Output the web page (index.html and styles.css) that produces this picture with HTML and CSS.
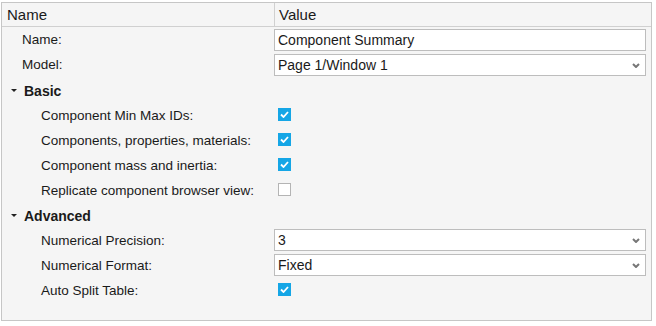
FILE: index.html
```html
<!DOCTYPE html>
<html lang="en">
<head>
    <meta charset="UTF-8">
    <title>Component Summary</title>
    <link rel="stylesheet" href="styles.css">
</head>
<body>
    <div class="panel">
        <div class="head">
            <div class="head-cell">Name</div>
            <div class="head-cell head-value">Value</div>
        </div>

        <div class="rows">
            <div class="row">
                <div class="label">Name:</div>
                <div class="value"><div class="field">Component Summary</div></div>
            </div>
            <div class="row">
                <div class="label">Model:</div>
                <div class="value">
                    <div class="field select">Page 1/Window 1
                        <svg class="arrow" width="8" height="5" viewBox="0 0 8 5"><polyline points="1,1 4,4 7,1" fill="none" stroke="#777" stroke-width="2"/></svg>
                    </div>
                </div>
            </div>

            <!-- Basic -->
            <div class="row section">
                <span class="caret"></span>Basic
            </div>
            <div class="row">
                <div class="label sub">Component Min Max IDs:</div>
                <div class="value"><span class="check on"><svg width="9" height="7" viewBox="0 0 9 7"><polyline points="1,3.5 3.5,6 8,1" fill="none" stroke="#fff" stroke-width="1.8"/></svg></span></div>
            </div>
            <div class="row">
                <div class="label sub">Components, properties, materials:</div>
                <div class="value"><span class="check on"><svg width="9" height="7" viewBox="0 0 9 7"><polyline points="1,3.5 3.5,6 8,1" fill="none" stroke="#fff" stroke-width="1.8"/></svg></span></div>
            </div>
            <div class="row">
                <div class="label sub">Component mass and inertia:</div>
                <div class="value"><span class="check on"><svg width="9" height="7" viewBox="0 0 9 7"><polyline points="1,3.5 3.5,6 8,1" fill="none" stroke="#fff" stroke-width="1.8"/></svg></span></div>
            </div>
            <div class="row">
                <div class="label sub">Replicate component browser view:</div>
                <div class="value"><span class="check"></span></div>
            </div>

            <!-- Advanced -->
            <div class="row section">
                <span class="caret"></span>Advanced
            </div>
            <div class="row">
                <div class="label sub">Numerical Precision:</div>
                <div class="value">
                    <div class="field select">3
                        <svg class="arrow" width="8" height="5" viewBox="0 0 8 5"><polyline points="1,1 4,4 7,1" fill="none" stroke="#777" stroke-width="2"/></svg>
                    </div>
                </div>
            </div>
            <div class="row">
                <div class="label sub">Numerical Format:</div>
                <div class="value">
                    <div class="field select">Fixed
                        <svg class="arrow" width="8" height="5" viewBox="0 0 8 5"><polyline points="1,1 4,4 7,1" fill="none" stroke="#777" stroke-width="2"/></svg>
                    </div>
                </div>
            </div>
            <div class="row">
                <div class="label sub">Auto Split Table:</div>
                <div class="value"><span class="check on"><svg width="9" height="7" viewBox="0 0 9 7"><polyline points="1,3.5 3.5,6 8,1" fill="none" stroke="#fff" stroke-width="1.8"/></svg></span></div>
            </div>
        </div>
    </div>
</body>
</html>
```

FILE: styles.css
```css
body {
    margin: 0;
    background: #fff;
    font-family: "Liberation Sans", Arial, sans-serif;
    font-size: 13.5px;
    color: #1a1a1a;
}

.panel {
    box-sizing: border-box;
    width: 651px;
    height: 319px;
    margin: 2px 0 0 1px;
    border: 1px solid #c6c6c6;
    background: #f5f5f5;
}

.head {
    display: grid;
    grid-template-columns: 272px 1fr;
    height: 23px;
    border-bottom: 1px solid #d0d0d0;
}

.head-cell {
    display: flex;
    align-items: center;
    padding-left: 5px;
    font-size: 15px;
}

.head-value {
    border-left: 1px solid #d0d0d0;
    padding-left: 4px;
}

.row {
    box-sizing: border-box;
    display: grid;
    grid-template-columns: 272px 1fr;
    height: 25px;
    align-items: center;
}

.label {
    padding-left: 20px;
}

.label.sub {
    padding-left: 39px;
    padding-top: 2px;
}

.value {
    padding-right: 5px;
}

.field {
    box-sizing: border-box;
    height: 22px;
    border: 1px solid #bdbdbd;
    background: #fff;
    display: flex;
    align-items: center;
    padding-left: 3px;
    position: relative;
    font-size: 14px;
}

.arrow {
    position: absolute;
    right: 5px;
    top: 8px;
}

.section {
    display: flex;
    align-items: center;
    font-weight: bold;
    font-size: 14px;
    padding-left: 9px;
    padding-top: 2px;
}

.caret {
    width: 0;
    height: 0;
    border-left: 3px solid transparent;
    border-right: 3px solid transparent;
    border-top: 3px solid #222;
    margin-right: 7px;
}

.check {
    box-sizing: border-box;
    display: flex;
    align-items: center;
    justify-content: center;
    width: 13px;
    height: 13px;
    margin-left: 4px;
    border: 1px solid #b4b4b4;
    background: #fff;
}

.check.on {
    border-color: #15a6e6;
    background: #15a6e6;
}
```
